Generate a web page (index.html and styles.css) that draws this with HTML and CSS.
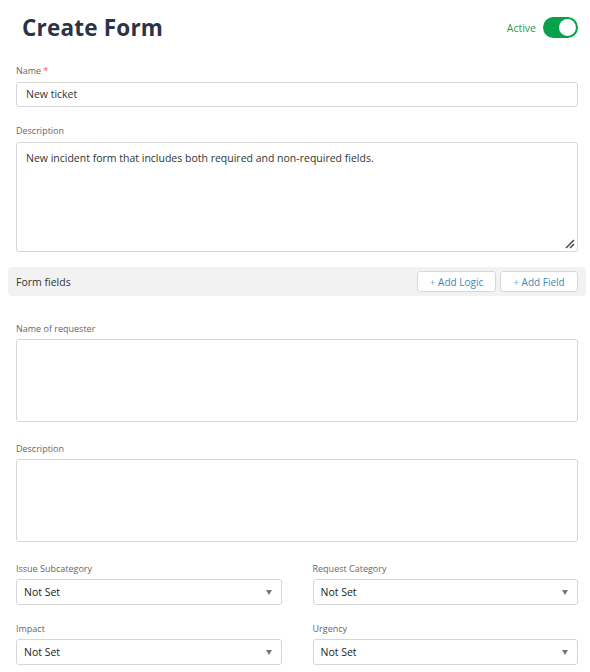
FILE: index.html
```html
<!DOCTYPE html>
<html>
<head>
<meta charset="utf-8">
<link rel="stylesheet" href="styles.css">
</head>
<body>
<div class="page">
  <header class="header">
    <h1 class="title">Create Form</h1>
    <div class="active">
      <span class="active-label">Active</span>
      <span class="toggle"><span class="knob"></span></span>
    </div>
  </header>

  <div class="field">
    <label class="label">Name<span class="req">*</span></label>
    <div class="input">New ticket</div>
  </div>

  <div class="field">
    <label class="label">Description</label>
    <div class="textarea tall">New incident form that includes both required and non-required fields.
      <svg class="grip" width="12" height="12" viewBox="0 0 12 12"><path d="M11 3 L3 11 M11 7 L7 11" stroke="#444" stroke-width="1.5" fill="none"/></svg>
    </div>
  </div>

  <div class="bar">
    <span class="bar-title">Form fields</span>
    <div class="bar-actions">
      <button class="btn"><span class="plus">+</span> Add Logic</button>
      <button class="btn"><span class="plus">+</span> Add Field</button>
    </div>
  </div>

  <div class="field first">
    <label class="label">Name of requester</label>
    <div class="textarea"></div>
  </div>

  <div class="field spaced">
    <label class="label">Description</label>
    <div class="textarea"></div>
  </div>

  <div class="grid">
    <div class="cell">
      <label class="label">Issue Subcategory</label>
      <div class="select"><span>Not Set</span><span class="caret"></span></div>
    </div>
    <div class="cell">
      <label class="label">Request Category</label>
      <div class="select"><span>Not Set</span><span class="caret"></span></div>
    </div>
    <div class="cell">
      <label class="label">Impact</label>
      <div class="select"><span>Not Set</span><span class="caret"></span></div>
    </div>
    <div class="cell">
      <label class="label">Urgency</label>
      <div class="select"><span>Not Set</span><span class="caret"></span></div>
    </div>
  </div>
</div>
</body>
</html>
```

FILE: styles.css
```css
* { box-sizing: border-box; }
html, body { margin: 0; padding: 0; background: #fff; overflow: hidden; }
body {
  font-family: "Open Sans", "Noto Sans", sans-serif;
  color: #333;
}
.page { padding: 0 4px 0 8px; }

.header {
  display: flex;
  align-items: center;
  justify-content: space-between;
  height: 55px;
  padding: 0 8px 0 14px;
}
.title {
  margin: 0;
  font-size: 22.5px;
  font-weight: 700;
  color: #2b3447;
  letter-spacing: 0.2px;
}
.active { display: flex; align-items: center; gap: 7px; }
.active-label { font-size: 10.5px; color: #1f9d4f; }
.toggle {
  width: 35px; height: 21px;
  border-radius: 11px;
  background: #08a04a;
  display: flex; align-items: center; justify-content: flex-end;
  padding-right: 2px;
}
.knob { width: 17px; height: 17px; border-radius: 50%; background: #fff; }

.field { padding: 0 8px; margin-top: 17px; }
.header + .field { margin-top: 9px; }
.field.first { margin-top: 25px; }
.field.spaced { margin-top: 19px; }

.label {
  display: block;
  font-size: 9px;
  line-height: 12px;
  color: #666;
  padding-top: 2px;
  margin-bottom: 4px;
}
.header + .field .label,
.header + .field + .field .label { padding-top: 1px; margin-bottom: 5px; }
.req { color: #e05a5a; margin-left: 2px; }

.input {
  height: 25px;
  border: 1px solid #d6d6d6;
  border-radius: 3px;
  padding: 0 9px;
  font-size: 10.5px;
  line-height: 23px;
  color: #333;
}
.textarea {
  position: relative;
  height: 83px;
  border: 1px solid #d6d6d6;
  border-radius: 3px;
  padding: 6px 9px;
  font-size: 10.5px;
  line-height: 18px;
  color: #333;
}
.textarea.tall { height: 110px; }
.grip { position: absolute; right: 2px; bottom: 2px; }

.bar {
  margin-top: 15px;
  height: 29px;
  background: #f2f2f2;
  border-radius: 4px;
  display: flex;
  align-items: center;
  justify-content: space-between;
  padding: 0 8px;
}
.bar-title { font-size: 10.5px; color: #333; }
.bar-actions { display: flex; gap: 4px; }
.btn {
  height: 21px;
  background: #fff;
  border: 1px solid #d8d8d8;
  border-radius: 3px;
  font-family: inherit;
  font-size: 10px;
  color: #3a89b8;
  padding: 0 11px;
  cursor: pointer;
}
.btn:first-child { width: 79px; }
.btn:last-child { width: 78px; }
.plus { color: #7ab0cf; }

.grid {
  display: grid;
  grid-template-columns: 1fr 1fr;
  column-gap: 31px;
  row-gap: 16px;
  padding: 0 8px;
  margin-top: 19px;
}
.select {
  height: 26px;
  border: 1px solid #d6d6d6;
  border-radius: 3px;
  padding: 0 9px 0 7px;
  display: flex;
  align-items: center;
  justify-content: space-between;
  font-size: 10.5px;
  color: #222;
}
.caret {
  width: 0; height: 0;
  border-left: 3px solid transparent;
  border-right: 3px solid transparent;
  border-top: 5px solid #777;
}
```
